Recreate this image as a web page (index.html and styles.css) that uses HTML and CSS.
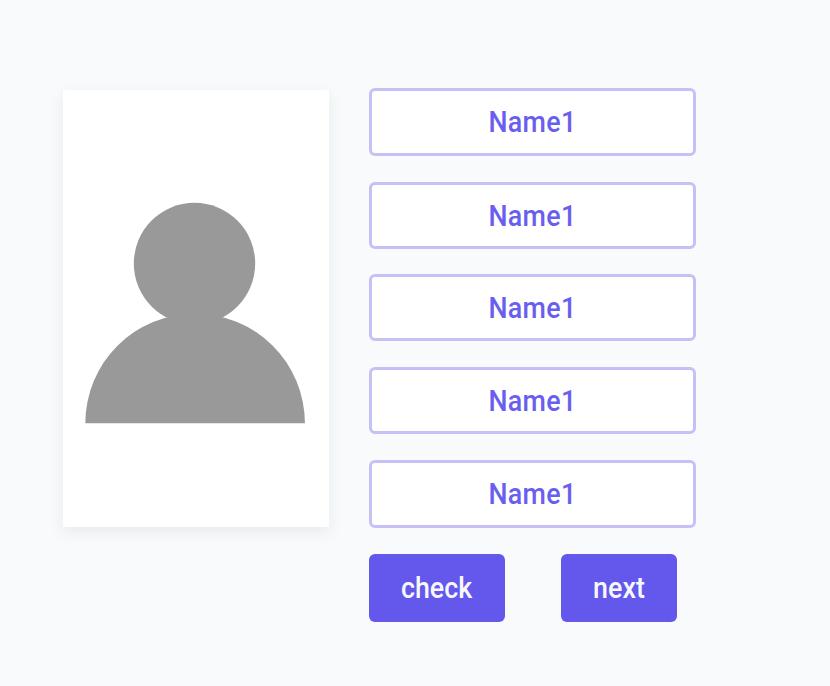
FILE: index.html
```html
<!DOCTYPE html>
<html lang="en">
<head>
<meta charset="utf-8">
<title>Name quiz</title>
<link rel="stylesheet" href="styles.css">
</head>
<body>
<main class="quiz">
  <div class="card">
    <svg class="avatar" viewBox="0 0 220 222" role="img" aria-label="Person">
      <circle cx="109.500" cy="61.500" r="60.700"/>
      <path d="M.3 221.300A109.800 109.800 0 0 1 219.900 221.300Z"/>
    </svg>
  </div>
  <div class="panel">
    <div class="options">
      <button class="option"><span class="label">Name1</span></button>
      <button class="option"><span class="label">Name1</span></button>
      <button class="option"><span class="label">Name1</span></button>
      <button class="option"><span class="label">Name1</span></button>
      <button class="option"><span class="label">Name1</span></button>
    </div>
    <div class="actions">
      <button class="action check"><span class="label">check</span></button>
      <button class="action next"><span class="label">next</span></button>
    </div>
  </div>
</main>
</body>
</html>
```
FILE: styles.css
```css
* { box-sizing: border-box; }
body { margin: 0; background: #f8fafc; font-family: Roboto, "Liberation Sans", sans-serif; }
.quiz { display: flex; align-items: flex-start; gap: 40px; min-height: 686px; padding: 88px 0 0 63px; }
.card { width: 266px; height: 437px; margin-top: 2px; padding: 112px 0 0 22px; background: #fff; box-shadow: 0 5px 14px rgba(40, 45, 50, .08); }
.avatar { display: block; width: 220px; height: 222px; fill: #999; }
.options { display: grid; grid-template-rows: 68px 67px 67px 67px 68px; row-gap: 26px; }
.option:nth-child(n+3) { margin-top: -1px; margin-bottom: 1px; }
button { display: flex; align-items: center; justify-content: center; padding: 0; font: 500 29px/34px Roboto, "Liberation Sans", sans-serif; }
.option { width: 327px; border: 3px solid #c5c0f6; border-radius: 6px; background: #fff; color: #695eef; }
.label { display: block; transform: scaleX(.925); }
.option .label { letter-spacing: .3px; }
.actions { display: flex; gap: 56px; margin-top: 25px; }
.action { height: 68px; border: 0; border-radius: 6px; background: #6358eb; color: #f7f7ff; }
.check { width: 136px; }
.next { width: 116px; }
```
